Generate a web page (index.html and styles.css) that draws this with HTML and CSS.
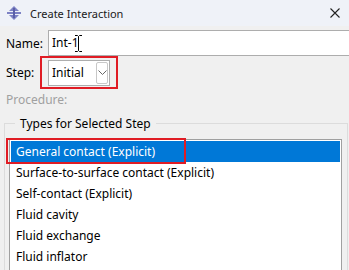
FILE: index.html
```html
<!DOCTYPE html>
<html>
	<head>
		<meta charset="UTF-8">
		<title>Create Interaction</title>
		<link rel="stylesheet" href="styles.css">
	</head>
	<body>
		<div class="dialog">
			<div class="titlebar">
				<svg class="appicon" width="16" height="16" viewBox="0 0 16 16">
					<path d="M8 1 L13 6 L3 6 Z" fill="#7d82c4"/>
					<path d="M8 15 L13 10 L3 10 Z" fill="#7d82c4"/>
					<rect x="1" y="7" width="14" height="2" fill="#7d82c4"/>
					<rect x="7" y="3" width="2" height="10" fill="#5b60a8"/>
				</svg>
				<span class="title">Create Interaction</span>
				<svg class="close" width="10" height="10" viewBox="0 0 10 10">
					<path d="M0.5 0.5 L9.5 9.5 M9.5 0.5 L0.5 9.5" stroke="#222" stroke-width="1.1"/>
				</svg>
			</div>

			<div class="row namerow">
				<span class="label">Name:</span>
				<div class="textbox">Int-1</div>
			</div>

			<div class="row steprow">
				<span class="label">Step:</span>
				<div class="highlight">
					<div class="combo">
						<span>Initial</span>
						<div class="dropbtn">
							<svg width="9" height="5" viewBox="0 0 9 5">
								<path d="M0.5 0.5 L4.5 4.5 L8.5 0.5" stroke="#666" stroke-width="1" fill="none"/>
							</svg>
						</div>
					</div>
				</div>
			</div>

			<div class="procedure">Procedure:</div>

			<fieldset class="types">
				<legend>Types for Selected Step</legend>
				<div class="list">
					<div class="item selected">General contact (Explicit)</div>
					<div class="item">Surface-to-surface contact (Explicit)</div>
					<div class="item">Self-contact (Explicit)</div>
					<div class="item">Fluid cavity</div>
					<div class="item">Fluid exchange</div>
					<div class="item">Fluid inflator</div>
				</div>
			</fieldset>

			<!-- 鼠标的I形光标 -->
			<svg class="ibeam" width="7" height="17" viewBox="0 0 7 17">
				<path d="M0 0.5 H2.5 L3.5 1.5 L4.5 0.5 H7 M3.5 1.5 V15.5 M0 16.5 H2.5 L3.5 15.5 L4.5 16.5 H7" stroke="#000" stroke-width="1" fill="none"/>
			</svg>
			<!-- 选中项的红框 -->
			<div class="selbox"></div>
		</div>
	</body>
</html>
```

FILE: styles.css
```css
*{margin: 0;padding: 0;box-sizing: border-box;}
body{
	width: 349px;
	height: 270px;
	overflow: hidden;
	background: #f0f0f0;
	font-family: "Noto Sans", "Open Sans", sans-serif;
	font-size: 12px;
	color: #000;
}
.dialog{
	position: relative;
	height: 270px;
	overflow: hidden;
}
.titlebar{
	height: 26px;
	display: flex;
	align-items: center;
	padding-left: 6px;
	background: #eff2f8;
}
.appicon{
	margin-right: 8px;
}
.title{
	font-size: 11px;
	color: #1a1a1a;
	flex: 1;
}
.close{
	margin-right: 9px;
}
.row{
	display: flex;
	align-items: center;
}
.label{
	width: 48px;
	padding-left: 6px;
}
.namerow{
	margin-top: 4px;
	height: 26px;
}
.textbox{
	flex: 1;
	height: 26px;
	margin-right: -10px;
	background: #fff;
	border: 1px solid #adadad;
	padding-left: 3px;
	line-height: 24px;
}
.steprow{
	height: 33px;
}
.steprow .label{
	width: 40px;
}
.highlight{
	width: 78px;
	height: 33px;
	border: 2px solid #e01c24;
	padding: 1px 6px;
	display: flex;
	align-items: center;
}
.combo{
	width: 62px;
	height: 26px;
	background: #fff;
	border: 1px solid #adadad;
	display: flex;
	align-items: center;
	padding-left: 3px;
}
.combo span{
	flex: 1;
}
.dropbtn{
	width: 12px;
	height: 22px;
	margin-right: 1px;
	border: 1px solid #c8c8c8;
	border-radius: 2px;
	display: flex;
	align-items: center;
	justify-content: center;
}
.procedure{
	color: #a0a0a0;
	padding-left: 6px;
	height: 22px;
	line-height: 22px;
	margin-bottom: 4px;
}
.types{
	margin: 0 1px 0 4px;
	border: 1px solid #dcdcdc;
	padding: 7px 5px 0 4px;
	height: 170px;
}
.types legend{
	margin-left: 6px;
	padding: 0 5px;
	line-height: 17px;
	height: 17px;
}
.list{
	background: #fff;
	border: 1px solid #a0a0a0;
	padding: 1px;
	height: 200px;
}
.item{
	height: 21px;
	line-height: 21px;
	padding-left: 5px;
	white-space: nowrap;
}
.selected{
	background: #0078d7;
	color: #fff;
}
.ibeam{
	position: absolute;
	left: 75px;
	top: 35px;
}
.selbox{
	position: absolute;
	left: 6px;
	top: 138px;
	width: 180px;
	height: 26px;
	border: 2px solid #e01c24;
}
```
